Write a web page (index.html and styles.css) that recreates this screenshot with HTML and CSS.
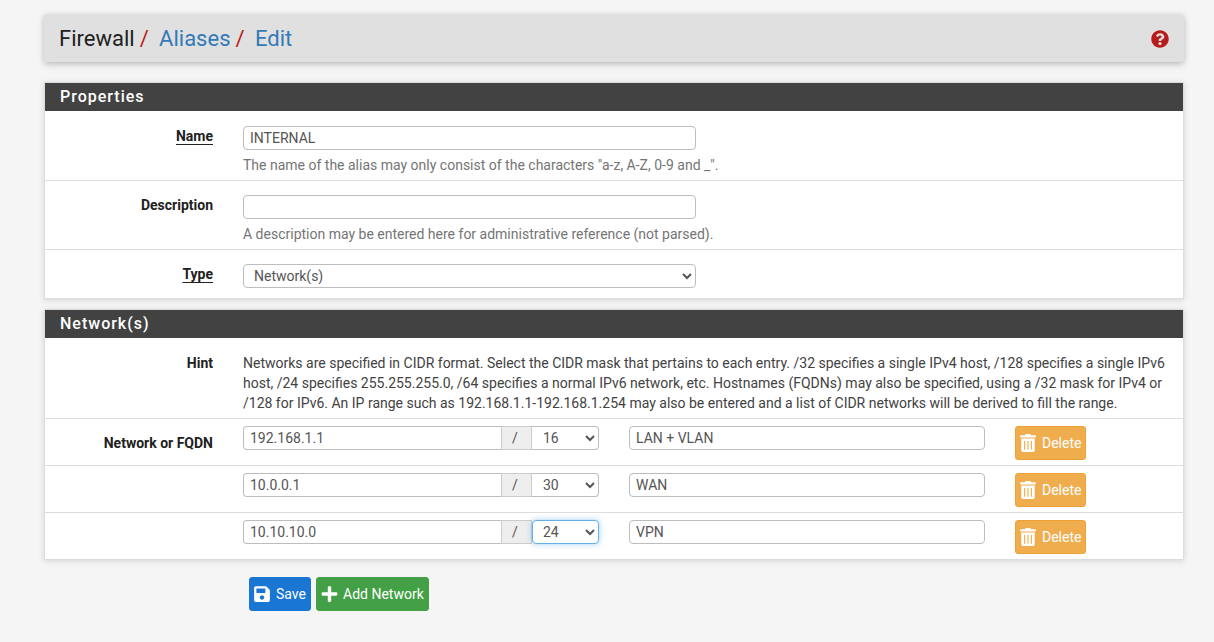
FILE: index.html
```html
<!DOCTYPE html>
<html lang="en">
<head>
<meta charset="utf-8">
<title>Firewall: Aliases: Edit</title>
<link rel="stylesheet" href="styles.css">
</head>
<body>
<div class="container">
  <header class="page-header">
    <ol class="crumbs">
      <li>Firewall</li>
      <li><a href="#">Aliases</a></li>
      <li><a href="#">Edit</a></li>
    </ol>
    <a href="#" class="help" aria-label="Help">
      <svg viewBox="0 0 512 512" class="help-icon"><path fill="currentColor" d="M504 256c0 136.997-111.043 248-248 248S8 392.997 8 256C8 119.083 119.043 8 256 8s248 111.083 248 248zM262.655 90c-54.497 0-89.255 22.957-116.549 63.758-3.536 5.286-2.353 12.415 2.715 16.258l34.699 26.31c5.205 3.947 12.621 3.008 16.665-2.122 17.864-22.658 30.113-35.797 57.303-35.797 20.429 0 45.698 13.148 45.698 32.958 0 14.976-12.363 22.667-32.534 33.976C247.128 238.528 216 254.941 216 296v4c0 6.627 5.373 12 12 12h56c6.627 0 12-5.373 12-12v-1.333c0-28.462 83.186-29.647 83.186-106.667 0-58.002-60.165-102-116.531-102zM256 338c-25.365 0-46 20.635-46 46 0 25.364 20.635 46 46 46s46-20.636 46-46c0-25.365-20.635-46-46-46z"/></svg>
    </a>
  </header>

  <section class="panel">
    <h2 class="panel-title">Properties</h2>
    <div class="row row-form">
      <label class="label required">Name</label>
      <div class="field">
        <input class="control" type="text" value="INTERNAL">
        <p class="help-text">The name of the alias may only consist of the characters "a-z, A-Z, 0-9 and _".</p>
      </div>
    </div>
    <div class="row row-form row-desc">
      <label class="label">Description</label>
      <div class="field">
        <input class="control" type="text">
        <p class="help-text">A description may be entered here for administrative reference (not parsed).</p>
      </div>
    </div>
    <div class="row row-type">
      <label class="label required">Type</label>
      <div class="field">
        <select class="control select-type"><option>Network(s)</option></select>
      </div>
    </div>
  </section>

  <section class="panel">
    <h2 class="panel-title">Network(s)</h2>
    <div class="row row-hint">
      <span class="label">Hint</span>
      <p class="hint">Networks are specified in CIDR format. Select the CIDR mask that pertains to each entry. /32 specifies a single IPv4 host, /128 specifies a single IPv6 host, /24 specifies 255.255.255.0, /64 specifies a normal IPv6 network, etc. Hostnames (FQDNs) may also be specified, using a /32 mask for IPv4 or /128 for IPv6. An IP range such as 192.168.1.1-192.168.1.254 may also be entered and a list of CIDR networks will be derived to fill the range.</p>
    </div>

    <div class="row row-net">
      <label class="label">Network or FQDN</label>
      <div class="cidr">
        <input class="cidr-ip" type="text" value="192.168.1.1"><span class="cidr-slash">/</span><select class="cidr-mask"><option>16</option></select>
      </div>
      <input class="control note" type="text" value="LAN + VLAN">
      <button class="btn btn-delete" type="button"><svg viewBox="0 0 448 512" class="ico-trash"><path fill="currentColor" d="M32 464a48 48 0 0 0 48 48h288a48 48 0 0 0 48-48V128H32zm272-256a16 16 0 0 1 32 0v224a16 16 0 0 1-32 0zm-96 0a16 16 0 0 1 32 0v224a16 16 0 0 1-32 0zm-96 0a16 16 0 0 1 32 0v224a16 16 0 0 1-32 0zM432 32H312l-9.4-18.7A24 24 0 0 0 281.1 0H166.8a23.72 23.72 0 0 0-21.4 13.3L136 32H16A16 16 0 0 0 0 48v32a16 16 0 0 0 16 16h416a16 16 0 0 0 16-16V48a16 16 0 0 0-16-16z"/></svg>Delete</button>
    </div>
    <div class="row row-net">
      <span class="label"></span>
      <div class="cidr">
        <input class="cidr-ip" type="text" value="10.0.0.1"><span class="cidr-slash">/</span><select class="cidr-mask"><option>30</option></select>
      </div>
      <input class="control note" type="text" value="WAN">
      <button class="btn btn-delete" type="button"><svg viewBox="0 0 448 512" class="ico-trash"><path fill="currentColor" d="M32 464a48 48 0 0 0 48 48h288a48 48 0 0 0 48-48V128H32zm272-256a16 16 0 0 1 32 0v224a16 16 0 0 1-32 0zm-96 0a16 16 0 0 1 32 0v224a16 16 0 0 1-32 0zm-96 0a16 16 0 0 1 32 0v224a16 16 0 0 1-32 0zM432 32H312l-9.4-18.7A24 24 0 0 0 281.1 0H166.8a23.72 23.72 0 0 0-21.4 13.3L136 32H16A16 16 0 0 0 0 48v32a16 16 0 0 0 16 16h416a16 16 0 0 0 16-16V48a16 16 0 0 0-16-16z"/></svg>Delete</button>
    </div>
    <div class="row row-net">
      <span class="label"></span>
      <div class="cidr">
        <input class="cidr-ip" type="text" value="10.10.10.0"><span class="cidr-slash">/</span><select class="cidr-mask is-focus"><option>24</option></select>
      </div>
      <input class="control note" type="text" value="VPN">
      <button class="btn btn-delete" type="button"><svg viewBox="0 0 448 512" class="ico-trash"><path fill="currentColor" d="M32 464a48 48 0 0 0 48 48h288a48 48 0 0 0 48-48V128H32zm272-256a16 16 0 0 1 32 0v224a16 16 0 0 1-32 0zm-96 0a16 16 0 0 1 32 0v224a16 16 0 0 1-32 0zm-96 0a16 16 0 0 1 32 0v224a16 16 0 0 1-32 0zM432 32H312l-9.4-18.7A24 24 0 0 0 281.1 0H166.8a23.72 23.72 0 0 0-21.4 13.3L136 32H16A16 16 0 0 0 0 48v32a16 16 0 0 0 16 16h416a16 16 0 0 0 16-16V48a16 16 0 0 0-16-16z"/></svg>Delete</button>
    </div>
  </section>

  <div class="actions">
    <button class="btn btn-save" type="button"><svg viewBox="0 0 448 512" class="ico-save"><path fill="currentColor" d="M433.941 129.941l-83.882-83.882A48 48 0 0 0 316.118 32H48C21.49 32 0 53.49 0 80v352c0 26.51 21.49 48 48 48h352c26.51 0 48-21.49 48-48V163.882a48 48 0 0 0-14.059-33.941zM224 416c-35.346 0-64-28.654-64-64 0-35.346 28.654-64 64-64s64 28.654 64 64c0 35.346-28.654 64-64 64zm96-304.52V212c0 6.627-5.373 12-12 12H76c-6.627 0-12-5.373-12-12V108c0-6.627 5.373-12 12-12h228.52c3.183 0 6.235 1.264 8.485 3.515l3.48 3.48A11.996 11.996 0 0 1 320 111.48z"/></svg>Save</button>
    <button class="btn btn-add" type="button"><svg viewBox="0 0 448 512" class="ico-plus"><path fill="currentColor" d="M416 208H272V64c0-17.67-14.33-32-32-32h-32c-17.67 0-32 14.33-32 32v144H32c-17.67 0-32 14.33-32 32v32c0 17.67 14.33 32 32 32h144v144c0 17.67 14.33 32 32 32h32c17.67 0 32-14.33 32-32V304h144c17.67 0 32-14.33 32-32v-32c0-17.67-14.33-32-32-32z"/></svg>Add Network</button>
  </div>
</div>
</body>
</html>
```

FILE: styles.css
```css
* { box-sizing: border-box; }
html, body { margin: 0; padding: 0; }
body {
  background: #f5f5f5;
  color: #212121;
  font-family: Roboto, "Liberation Sans", sans-serif;
  font-size: 14px;
  line-height: 20px;
}
.container {
  width: 1140px;
  margin-left: 44px;
  padding-top: 14px;
}
.page-header {
  height: 48px;
  background: #e0e0e0;
  border-radius: 3px;
  box-shadow: 0 2px 6px rgba(0,0,0,.25);
  display: flex;
  align-items: center;
  justify-content: space-between;
  padding: 1px 15px 0;
  margin-bottom: 20px;
}
.crumbs {
  list-style: none;
  margin: 0;
  padding: 0;
  display: flex;
  font-size: 22px;
  line-height: 30px;
  color: #212121;
}
.crumbs li + li::before {
  content: "/";
  color: #b71c1c;
  padding: 0 10.4px 0 5px;
}
.crumbs a { color: #337ab7; text-decoration: none; }
.help { display: flex; color: #b71c1c; }
.help-icon { width: 18px; height: 18px; display: block; }
.panel {
  background: #fff;
  border: 1px solid #ddd;
  box-shadow: 0 1px 6px rgba(0,0,0,.14);
  margin-bottom: 10px;
}
.panel-title {
  margin: 0;
  height: 28px;
  background: #424242;
  color: #fff;
  font-size: 16px;
  font-weight: 500;
  letter-spacing: 1px;
  line-height: 27px;
  padding-left: 15px;
}
.row {
  display: flex;
  border-top: 1px solid #ddd;
}
.panel-title + .row { border-top: 0; }
.row-form { height: 69px; padding-top: 15px; }
.row-desc { padding-top: 14px; }
.row-type { height: 49px; padding-top: 14px; }
.row-hint { height: 80px; padding-top: 15px; }
.row-net { height: 47px; padding-top: 7px; }
.label {
  width: 168px;
  flex: none;
  text-align: right;
  font-weight: 700;
  color: #212121;
  margin-right: 30px;
  line-height: 20px;
}
.required {
  text-decoration: underline;
  text-underline-offset: 3px;
  text-decoration-thickness: 1px;
}
.row-net .label { padding-top: 7px; }
.field { flex: 1; }
.control {
  display: block;
  width: 453px;
  height: 24px;
  border: 1px solid #bdbdbd;
  border-radius: 4px;
  background: #fff;
  color: #555;
  font: 14px/20px Roboto, "Liberation Sans", sans-serif;
  padding: 1px 6px;
  outline: 0;
}
.help-text {
  margin: 5px 0 0;
  color: #757575;
  line-height: 20px;
}
.hint {
  margin: 0;
  width: 925px;
  line-height: 20px;
  color: #424242;
}
.cidr { display: flex; width: 356px; height: 24px; flex: none; }
.cidr-ip {
  width: 258px;
  height: 24px;
  border: 1px solid #bdbdbd;
  border-right: 0;
  border-radius: 4px 0 0 4px;
  font: 14px/20px Roboto, "Liberation Sans", sans-serif;
  color: #555;
  padding: 1px 6px;
  outline: 0;
}
.cidr-slash {
  width: 31px;
  height: 24px;
  background: #eee;
  border: 1px solid #ccc;
  padding-right: 3px;
  text-align: center;
  line-height: 22px;
  color: #555;
}
.cidr-mask {
  width: 67px;
  height: 24px;
  border: 1px solid #bdbdbd;
  border-left: 0;
  border-radius: 0 4px 4px 0;
  background: #fff;
  color: #555;
  font: 14px/20px Roboto, "Liberation Sans", sans-serif;
  padding: 1px 7px;
  outline: 0;
}
.cidr-mask.is-focus {
  border: 1px solid #66afe9;
  padding-left: 6px;
  border-radius: 4px;
  box-shadow: 0 0 6px rgba(102,175,233,.6);
}
.note { width: 356px; margin-left: 30px; flex: none; }
.btn {
  display: inline-flex;
  align-items: center;
  height: 34px;
  border-radius: 3px;
  border: 1px solid transparent;
  color: #fff;
  font: 14px/20px Roboto, "Liberation Sans", sans-serif;
  padding: 0 0 0 4px;
}
.btn-delete {
  width: 71px;
  margin-left: 30px;
  background: #f0ad4e;
  border-color: #eea236;
}
.ico-trash { width: 16px; height: 18px; margin-right: 6px; }
.actions {
  display: flex;
  gap: 5px;
  padding: 7px 0 0 205px;
}
.btn-save {
  width: 62px;
  background: #1976d2;
  border-color: #1976d2;
}
.ico-save { width: 16px; height: 18px; margin-right: 6px; }
.btn-add {
  width: 113px;
  background: #43a047;
  border-color: #43a047;
}
.ico-plus { width: 17px; height: 18px; margin-right: 5px; }
```
